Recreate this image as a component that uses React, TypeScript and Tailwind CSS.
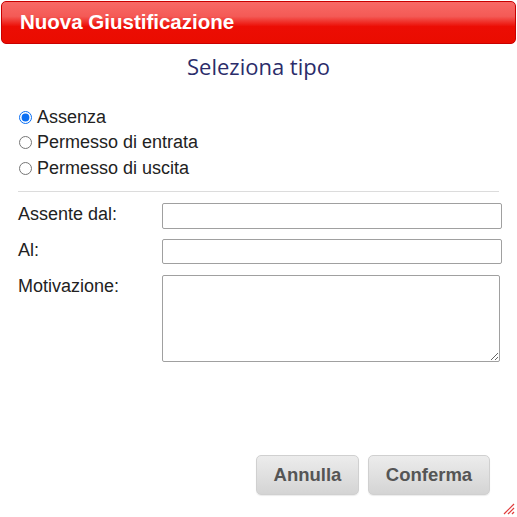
import React from "react";

export default function App() {
  return (
    <div className="w-[517px] h-[517px] bg-white relative overflow-hidden font-['Liberation_Sans',Arial,sans-serif]">
      <div className="pt-px px-px">
        <div className="h-[43px] rounded-[5px] border border-[#c90000] bg-[linear-gradient(to_bottom,#f86a66_0%,#f45a56_35%,#ec0d04_60%,#ea0c00_100%)] flex items-center pl-[18px]">
          <span className="text-white font-bold text-[20.5px] leading-none">Nuova Giustificazione</span>
        </div>
      </div>
      <div className="text-center mt-[7px] text-[22px] leading-[30px] text-[#2b2c6a] font-['Open_Sans',sans-serif]">
        Seleziona tipo
      </div>
      <div className="pl-[18px] pr-[14px] mt-[23px] text-[18px] text-[#222]">
        <div className="flex flex-col">
          <label className="flex items-center h-[26px]">
            <input type="radio" name="tipo" defaultChecked className="m-0 ml-[1px] mr-[5px] w-[13px] h-[13px] accent-[#0b6ff3]" />
            <span>Assenza</span>
          </label>
          <label className="flex items-center h-[25px]">
            <input type="radio" name="tipo" className="m-0 ml-[1px] mr-[5px] w-[13px] h-[13px]" />
            <span>Permesso di entrata</span>
          </label>
          <label className="flex items-center h-[26px]">
            <input type="radio" name="tipo" className="m-0 ml-[1px] mr-[5px] w-[13px] h-[13px]" />
            <span>Permesso di uscita</span>
          </label>
        </div>
        <div className="mt-[10px] h-px bg-[#dcdcdc] mr-[4px]" />
        <div className="mt-[11px] flex flex-col gap-[10px]">
          <div className="flex items-start">
            <span className="w-[144px] shrink-0 leading-[22px]">Assente dal:</span>
            <input className="w-[340px] shrink-0 h-[26px] border border-[#a0a0a0] rounded-[2px]" />
          </div>
          <div className="flex items-start">
            <span className="w-[144px] shrink-0 leading-[22px]">Al:</span>
            <input className="w-[340px] shrink-0 h-[25px] border border-[#a0a0a0] rounded-[2px]" />
          </div>
          <div className="flex items-start mt-[1px]">
            <span className="w-[144px] shrink-0 leading-[22px]">Motivazione:</span>
            <textarea className="w-[338px] shrink-0 h-[87px] border border-[#a0a0a0] rounded-[2px] resize" />
          </div>
        </div>
      </div>
      <div className="absolute left-[256px] top-[455px] flex gap-[9px]">
        <button className="w-[103px] h-[40px] rounded-[5px] border border-[#d0d0d0] bg-[linear-gradient(to_bottom,#ececec,#d4d4d4)] text-[#555] font-bold text-[18.5px] shadow-[0_1px_1px_rgba(0,0,0,0.08)]">
          Annulla
        </button>
        <button className="w-[122px] h-[40px] rounded-[5px] border border-[#d0d0d0] bg-[linear-gradient(to_bottom,#ececec,#d4d4d4)] text-[#555] font-bold text-[18.5px] shadow-[0_1px_1px_rgba(0,0,0,0.08)]">
          Conferma
        </button>
      </div>
      <svg className="absolute right-[2px] bottom-[2px]" width="12" height="12" viewBox="0 0 12 12">
        <line x1="1" y1="11" x2="11" y2="1" stroke="#e03c3c" strokeWidth="1.2" />
        <line x1="5" y1="11" x2="11" y2="5" stroke="#e03c3c" strokeWidth="1.2" />
        <line x1="9" y1="11" x2="11" y2="9" stroke="#e03c3c" strokeWidth="1.2" />
      </svg>
    </div>
  );
}
